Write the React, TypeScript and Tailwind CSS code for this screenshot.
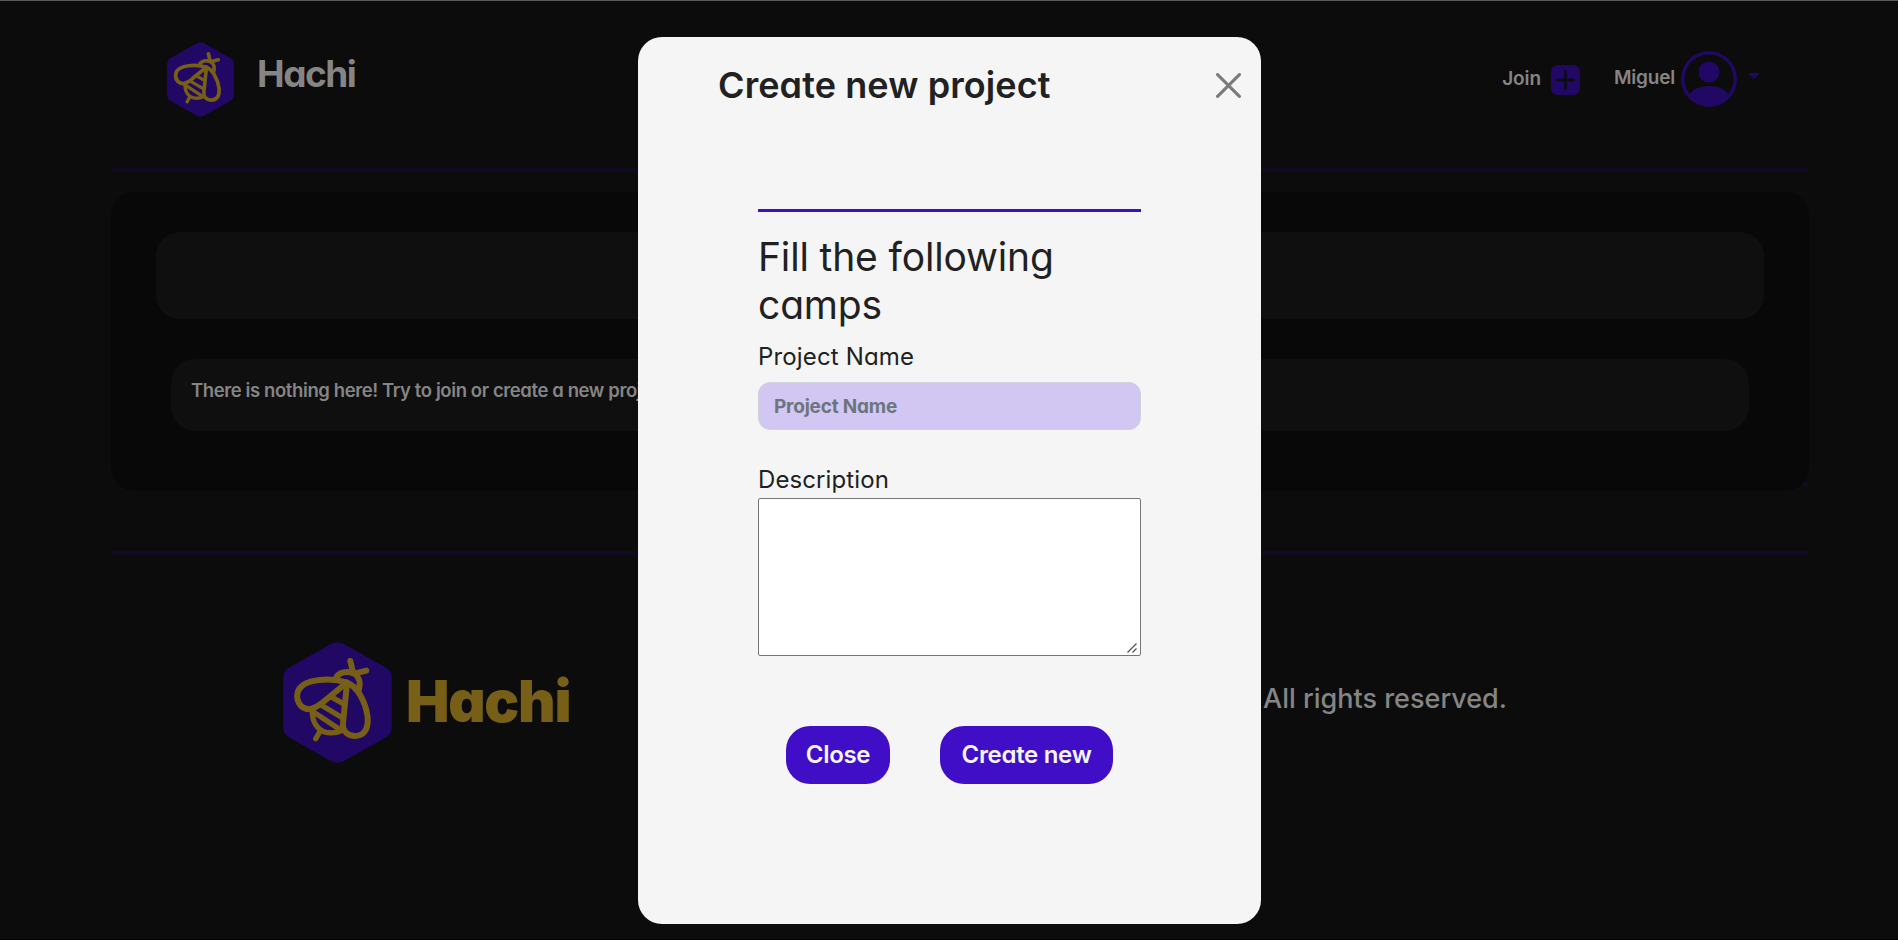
function Bee({ className }: { className: string }) {
  return (
    <svg viewBox="0 0 327 364" className={className} fill="none">
      <path
        d="M143 6Q163 -5 183 6L307 76Q327 87 327 109V255Q327 277 307 288L183 358Q163 369 143 358L20 288Q0 277 0 255V109Q0 87 20 76Z"
        fill="#200864"
      />
      <g stroke="#775f17" strokeWidth="18" strokeLinecap="round" strokeLinejoin="round">
        <path d="M202 57L210 90M250 86L214 95M160 106C168 94 183 89 200 91C222 94 232 112 230 132L227 148" />
        <path d="M192 122C140 105 62 112 46 145C34 174 52 203 80 202C98 199 110 190 126 176L192 122" />
        <path d="M192 122C222 132 248 180 254 225C258 266 240 283 215 283C190 281 177 264 180 244L192 126" />
        <path strokeWidth="16" d="M150 168L182 186M118 192L178 228M92 211L166 260M88 206C86 240 104 266 130 272C146 275 164 273 178 266M110 270L98 291" />
      </g>
    </svg>
  );
}

export default function App() {
  return (
    <div className="grid h-[940px] w-full overflow-hidden bg-[#0c0c0c] font-['Inter',sans-serif] text-[#858585] [font-feature-settings:'cv11'_1] [&>*]:[grid-area:1/1]">
      <div className="flex h-[940px] flex-col border-t border-b border-t-[#5a5a5a] border-b-black pr-[89px] pl-[111px]">
        <header className="flex h-[167px] shrink-0 items-start">
          <Bee className="mt-[41px] ml-14 h-[75px] w-[67px]" />
          <h1 className="mt-[46px] ml-[23px] text-[37px] leading-[54px] font-bold tracking-[-1.5px]">Hachi</h1>
          <div className="mr-[49px] ml-auto flex items-start text-[19px] leading-7 font-semibold">
            <span className="mt-16 tracking-[-0.1px]">Join</span>
            <svg viewBox="0 0 29 30" className="mt-16 ml-2.5 h-[30px] w-[29px]">
              <rect width="29" height="30" rx="6.5" fill="#200864" />
              <path d="M14.5 6.5V23.5M6.5 15H23" stroke="#0c0c0c" strokeWidth="2.4" strokeLinecap="round" />
            </svg>
            <span className="mt-[63px] ml-[34px] tracking-[-0.2px]">Miguel</span>
            <svg viewBox="0 0 16 16" className="mt-[50px] ml-1.5 size-14" fill="#200864">
              <path d="M11 6a3 3 0 1 1-6 0 3 3 0 0 1 6 0" />
              <path fillRule="evenodd" d="M0 8a8 8 0 1 1 16 0A8 8 0 0 1 0 8m8-7a7 7 0 0 0-5.468 11.37C3.242 11.226 4.805 10 8 10s4.757 1.225 5.468 2.37A7 7 0 0 0 8 1" />
            </svg>
            <svg viewBox="0 0 12 6" className="mt-[72px] ml-[11px] h-1.5 w-3">
              <path d="M0 0H12L6 6Z" fill="#200864" />
            </svg>
          </div>
        </header>
        <div className="h-1 shrink-0 bg-[#110a22]" />
        <div className="relative mt-5 shrink-0">
          <span className="absolute right-0 bottom-1 h-1.5 w-1.5 rounded-tr-sm bg-[#110a22]" />
          <main className="relative flex h-[299px] flex-col rounded-3xl bg-[#080808] px-[45px] pt-10">
            <div className="h-[87px] rounded-3xl bg-[#0f0f0f]" />
            <div className="mx-[15px] mt-10 h-[72px] rounded-3xl bg-[#0f0f0f] px-5 pt-[17px]">
              <p className="text-[18.5px] leading-7 font-semibold tracking-[-0.4px]">
                There is nothing here! Try to join or create a new project.
              </p>
            </div>
          </main>
        </div>
        <div className="mt-[60px] h-1 shrink-0 bg-[#110a22]" />
        <footer className="flex items-start">
          <Bee className="mt-[87px] ml-[172px] h-[121px] w-[109px] shrink-0" />
          <span className="mt-[111px] ml-3.5 text-[58px] leading-[70px] font-black tracking-[-1.3px] text-[#775f17]">Hachi</span>
          <span className="mt-[124px] mr-[302px] ml-auto text-[27px] leading-10 font-medium">All rights reserved.</span>
        </footer>
      </div>

      <section className="z-10 mt-[37px] ml-[638px] flex h-[887px] w-[623px] flex-col rounded-3xl bg-[#f5f5f5] text-[#212121]">
        <div className="flex h-[172px] shrink-0 items-start pr-5 pl-20">
          <h2 className="mt-5 text-[36px] leading-[56px] font-semibold tracking-[0.1px]">Create new project</h2>
          <svg viewBox="0 0 16 16" className="mt-9 ml-auto size-[25px]" fill="#7b7b7b">
            <path d="M.293.293a1 1 0 0 1 1.414 0L8 6.586 14.293.293a1 1 0 1 1 1.414 1.414L9.414 8l6.293 6.293a1 1 0 0 1-1.414 1.414L8 9.414l-6.293 6.293a1 1 0 0 1-1.414-1.414L6.586 8 .293 1.707a1 1 0 0 1 0-1.414" />
          </svg>
        </div>
        <form className="mx-[120px] flex flex-col border-t-[3px] border-[#400ec7]">
          <h3 className="mt-[21px] text-[39px] leading-[48px] font-normal tracking-[-0.15px]">Fill the following camps</h3>
          <label className="mt-2.5 text-[24px] leading-9 tracking-[0.15px]">Project Name</label>
          <input
            className="mt-[7px] h-12 rounded-xl border border-[#ced4da] bg-[#d2c7f3] px-[15px] text-[19px] font-bold tracking-[-0.2px] placeholder:text-[#6c757d]"
            placeholder="Project Name"
          />
          <label className="mt-8 text-[24px] leading-9 tracking-[0.1px]">Description</label>
          <div className="relative flex">
            <textarea className="h-[158px] w-full resize-none rounded-[2px] border border-[#767676] bg-white" />
            <svg viewBox="0 0 10 10" className="absolute right-1 bottom-[3px] size-2.5" stroke="#555" strokeWidth="1.3">
              <path d="M0.5 9.5L9.5 0.5M5.5 9.5L9.5 5.5" />
            </svg>
          </div>
          <div className="mt-[70px] flex justify-center gap-[50px] text-[24px] font-semibold tracking-[-0.3px] text-[#f5f5f5]">
            <button type="button" className="h-[58px] w-[104px] rounded-3xl bg-[#400ec7]">Close</button>
            <button type="button" className="h-[58px] w-[173px] rounded-3xl bg-[#400ec7] whitespace-nowrap">Create new</button>
          </div>
        </form>
      </section>
    </div>
  );
}
